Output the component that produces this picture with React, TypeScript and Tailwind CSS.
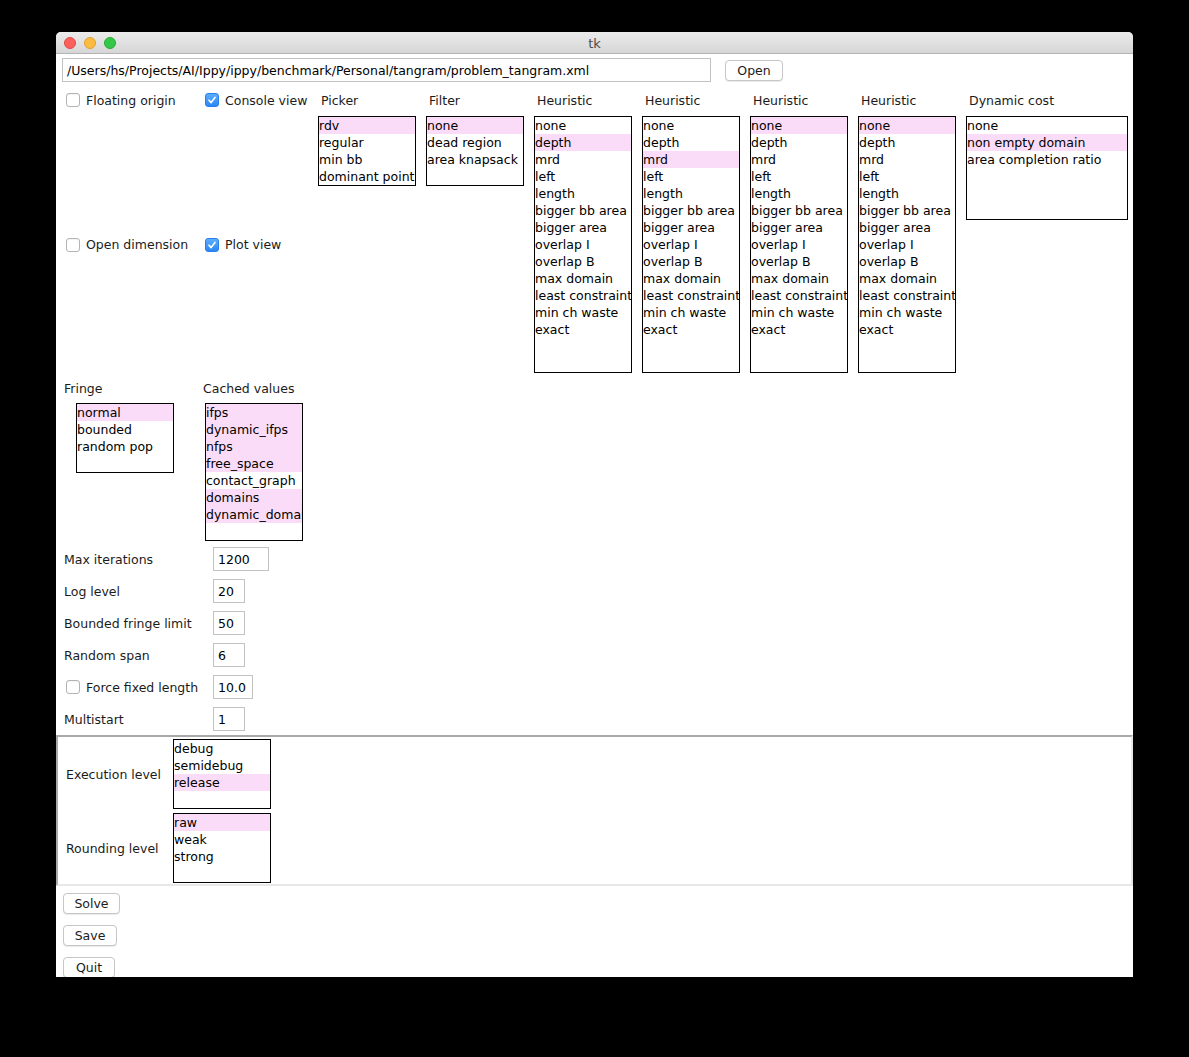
import React from "react";

// Tk listbox look: thin black frame, 17px rows, pink selection band
function ListBox({
  items,
  sel,
  size,
}: {
  items: string[];
  sel: number[];
  size: string;
}) {
  return (
    <div className={`border border-black bg-white overflow-hidden ${size}`}>
      {items.map((it, i) => (
        <div
          key={it}
          className={`h-[17px] leading-[17px] whitespace-nowrap overflow-hidden text-black ${
            sel.includes(i) ? "bg-[#fbdcf8]" : ""
          }`}
        >
          {it}
        </div>
      ))}
    </div>
  );
}

function CheckBox({ checked, label }: { checked?: boolean; label: string }) {
  return (
    <div className="flex items-center gap-[6px]">
      {checked ? (
        <div className="w-[14px] h-[14px] rounded-[3px] bg-gradient-to-b from-[#5aaefc] to-[#2a87f4] border border-[#2a7fe8] flex items-center justify-center">
          <svg width="10" height="10" viewBox="0 0 10 10">
            <path d="M2 5.2 L4.1 7.6 L8 2.4" fill="none" stroke="white" strokeWidth="1.6" strokeLinecap="round" strokeLinejoin="round" />
          </svg>
        </div>
      ) : (
        <div className="w-[14px] h-[14px] rounded-[3px] bg-white border border-[#b4b4b4] shadow-[inset_0_1px_1px_rgba(0,0,0,0.05)]" />
      )}
      <span className="text-[#1b1b1b] pt-[2px]">{label}</span>
    </div>
  );
}

function Field({ value, w }: { value: string; w: string }) {
  return (
    <div className={`h-[24px] border border-[#c2c2c2] bg-white pl-[4px] pt-[1px] leading-[22px] text-black ${w}`}>
      {value}
    </div>
  );
}

function Btn({ label, w }: { label: string; w: string }) {
  return (
    <div
      className={`h-[21px] rounded-[4px] border border-[#c6c6c6] bg-white shadow-[0_1px_0_rgba(0,0,0,0.08)] flex items-center justify-center pt-[2px] text-[#1b1b1b] ${w}`}
    >
      {label}
    </div>
  );
}

const heuristics = [
  "none",
  "depth",
  "mrd",
  "left",
  "length",
  "bigger bb area",
  "bigger area",
  "overlap I",
  "overlap B",
  "max domain",
  "least constraint",
  "min ch waste",
  "exact",
];

export default function App() {
  return (
    <div className="min-h-[1057px] bg-black pt-[32px] font-['DejaVu_Sans',sans-serif] text-[12.5px]">
      <div className="ml-[56px] w-[1077px] h-[945px] bg-white overflow-hidden rounded-t-[5px] flex flex-col">
        {/* title bar */}
        <div className="h-[22px] shrink-0 bg-gradient-to-b from-[#ececec] to-[#d6d6d6] border-b border-[#b3b3b3] flex items-center relative">
          <div className="flex items-center gap-[8px] pl-[8px] pt-[1px]">
            <div className="w-[12px] h-[12px] rounded-full bg-[#fc605c] border border-[#de4a45]" />
            <div className="w-[12px] h-[12px] rounded-full bg-[#fdbc40] border border-[#dea032]" />
            <div className="w-[12px] h-[12px] rounded-full bg-[#34c84a] border border-[#27aa35]" />
          </div>
          <div className="absolute inset-0 flex items-center justify-center pt-[2px] text-[13px] text-[#4d4d4d]">tk</div>
        </div>

        {/* path row */}
        <div className="flex items-center mt-[4px] pl-[6px] gap-[14px]">
          <div className="w-[649px] h-[24px] border border-[#c2c2c2] pl-[4px] pt-[1px] leading-[22px] text-black whitespace-nowrap overflow-hidden">
            /Users/hs/Projects/AI/Ippy/ippy/benchmark/Personal/tangram/problem_tangram.xml
          </div>
          <Btn label="Open" w="w-[58px]" />
        </div>

        {/* options + lists */}
        <div className="grid grid-cols-[144px_113px_repeat(6,108px)_172px] grid-rows-[24px_auto] mt-[6px]">
          <div className="pl-[10px] flex items-center"><CheckBox label="Floating origin" /></div>
          <div className="pl-[5px] flex items-center"><CheckBox checked label="Console view" /></div>
          <div className="pl-[8px] pt-[2px] flex items-center text-[#1b1b1b]">Picker</div>
          <div className="pl-[8px] pt-[2px] flex items-center text-[#1b1b1b]">Filter</div>
          <div className="pl-[8px] pt-[2px] flex items-center text-[#1b1b1b]">Heuristic</div>
          <div className="pl-[8px] pt-[2px] flex items-center text-[#1b1b1b]">Heuristic</div>
          <div className="pl-[8px] pt-[2px] flex items-center text-[#1b1b1b]">Heuristic</div>
          <div className="pl-[8px] pt-[2px] flex items-center text-[#1b1b1b]">Heuristic</div>
          <div className="pl-[8px] pt-[2px] flex items-center text-[#1b1b1b]">Dynamic cost</div>

          <div className="pl-[10px] pt-[4px] flex items-center"><CheckBox label="Open dimension" /></div>
          <div className="pl-[5px] pt-[4px] flex items-center"><CheckBox checked label="Plot view" /></div>
          <div className="pl-[5px] pt-[4px]">
            <ListBox items={["rdv", "regular", "min bb", "dominant point"]} sel={[0]} size="w-[98px] h-[70px]" />
          </div>
          <div className="pl-[5px] pt-[4px]">
            <ListBox items={["none", "dead region", "area knapsack"]} sel={[0]} size="w-[98px] h-[70px]" />
          </div>
          <div className="pl-[5px] pt-[4px]">
            <ListBox items={heuristics} sel={[1]} size="w-[98px] h-[257px]" />
          </div>
          <div className="pl-[5px] pt-[4px]">
            <ListBox items={heuristics} sel={[2]} size="w-[98px] h-[257px]" />
          </div>
          <div className="pl-[5px] pt-[4px]">
            <ListBox items={heuristics} sel={[0]} size="w-[98px] h-[257px]" />
          </div>
          <div className="pl-[5px] pt-[4px]">
            <ListBox items={heuristics} sel={[0]} size="w-[98px] h-[257px]" />
          </div>
          <div className="pl-[5px] pt-[4px]">
            <ListBox items={["none", "non empty domain", "area completion ratio"]} sel={[1]} size="w-[162px] h-[104px]" />
          </div>
        </div>

        {/* fringe / cached values */}
        <div className="flex mt-[5px]">
          <div className="w-[147px]">
            <div className="h-[21px] pl-[8px] pt-[1px] flex items-center text-[#1b1b1b]">Fringe</div>
            <div className="ml-[20px] mt-[4px]">
              <ListBox items={["normal", "bounded", "random pop"]} sel={[0]} size="w-[98px] h-[70px]" />
            </div>
          </div>
          <div>
            <div className="h-[21px] pt-[1px] flex items-center text-[#1b1b1b]">Cached values</div>
            <div className="ml-[2px] mt-[4px]">
              <ListBox
                items={["ifps", "dynamic_ifps", "nfps", "free_space", "contact_graph", "domains", "dynamic_domains"]}
                sel={[0, 1, 2, 3, 5, 6]}
                size="w-[98px] h-[138px]"
              />
            </div>
          </div>
        </div>

        {/* numeric parameters */}
        <div className="grid grid-cols-[157px_auto] auto-rows-[24px] gap-y-[8px] mt-[6px] items-center">
          <div className="pl-[8px] pt-[2px] text-[#1b1b1b]">Max iterations</div>
          <Field value="1200" w="w-[56px]" />
          <div className="pl-[8px] pt-[2px] text-[#1b1b1b]">Log level</div>
          <Field value="20" w="w-[32px]" />
          <div className="pl-[8px] pt-[2px] text-[#1b1b1b]">Bounded fringe limit</div>
          <Field value="50" w="w-[32px]" />
          <div className="pl-[8px] pt-[2px] text-[#1b1b1b]">Random span</div>
          <Field value="6" w="w-[32px]" />
          <div className="pl-[10px]"><CheckBox label="Force fixed length" /></div>
          <Field value="10.0" w="w-[40px]" />
          <div className="pl-[8px] pt-[2px] text-[#1b1b1b]">Multistart</div>
          <Field value="1" w="w-[32px]" />
        </div>

        {/* levels frame */}
        <div className="mt-[4px] border-t-2 border-l-2 border-[#a9a9a9] border-r-2 border-r-[#e8e8e8] border-b-2 border-b-[#e8e8e8] pt-[2px] pb-[1px]">
          <div className="grid grid-cols-[115px_auto] gap-y-[4px] items-center">
            <div className="pl-[8px] pt-[2px] text-[#1b1b1b]">Execution level</div>
            <ListBox items={["debug", "semidebug", "release"]} sel={[2]} size="w-[98px] h-[70px]" />
            <div className="pl-[8px] pt-[2px] text-[#1b1b1b]">Rounding level</div>
            <ListBox items={["raw", "weak", "strong"]} sel={[0]} size="w-[98px] h-[70px]" />
          </div>
        </div>

        {/* buttons */}
        <div className="flex flex-col gap-[11px] pl-[7px] mt-[7px]">
          <Btn label="Solve" w="w-[57px]" />
          <Btn label="Save" w="w-[54px]" />
          <Btn label="Quit" w="w-[52px]" />
        </div>
      </div>
    </div>
  );
}
